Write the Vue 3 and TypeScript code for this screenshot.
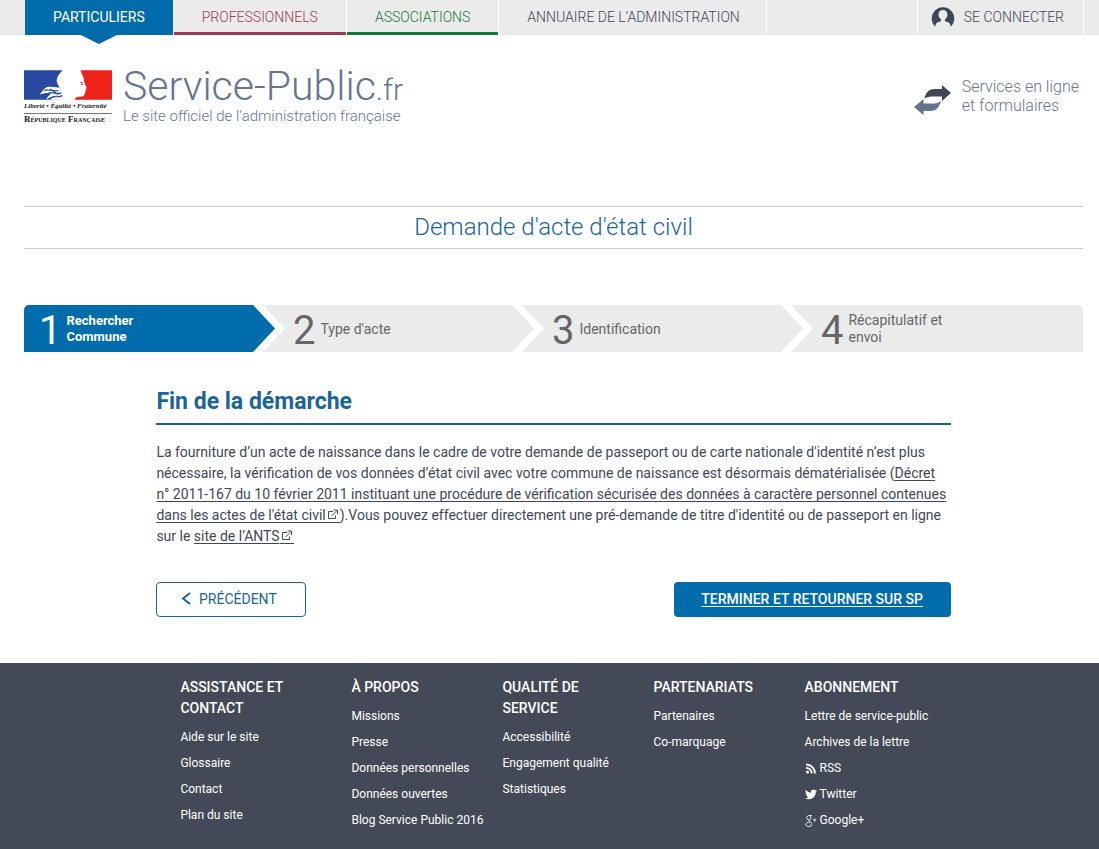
<script setup lang="ts">
interface NavTab { label: string; kind: string }
interface Step { label: string; wide: number }
interface FooterLink { label: string; icon?: 'rss' | 'twitter' | 'google' }
interface FooterColumn { title: string; links: FooterLink[] }

const tabs: NavTab[] = [
  { label: 'PARTICULIERS', kind: 'active' },
  { label: 'PROFESSIONNELS', kind: 'pro' },
  { label: 'ASSOCIATIONS', kind: 'asso' },
  { label: 'ANNUAIRE DE L’ADMINISTRATION', kind: 'directory' },
]

const steps: Step[] = [
  { label: 'Rechercher Commune', wide: 251 },
  { label: "Type d'acte", wide: 271 },
  { label: 'Identification', wide: 281 },
  { label: 'Récapitulatif et envoi', wide: 292 },
]

const columns: FooterColumn[] = [
  {
    title: 'Assistance et contact',
    links: [{ label: 'Aide sur le site' }, { label: 'Glossaire' }, { label: 'Contact' }, { label: 'Plan du site' }],
  },
  {
    title: 'À propos',
    links: [
      { label: 'Missions' },
      { label: 'Presse' },
      { label: 'Données personnelles' },
      { label: 'Données ouvertes' },
      { label: 'Blog Service Public 2016' },
    ],
  },
  {
    title: 'Qualité de service',
    links: [{ label: 'Accessibilité' }, { label: 'Engagement qualité' }, { label: 'Statistiques' }],
  },
  { title: 'Partenariats', links: [{ label: 'Partenaires' }, { label: 'Co-marquage' }] },
  {
    title: 'Abonnement',
    links: [
      { label: 'Lettre de service-public' },
      { label: 'Archives de la lettre' },
      { label: 'RSS', icon: 'rss' },
      { label: 'Twitter', icon: 'twitter' },
      { label: 'Google+', icon: 'google' },
    ],
  },
]
</script>

<template>
  <div class="page">
    <nav class="topbar">
      <a v-for="tab in tabs" :key="tab.kind" href="#" class="tab" :class="tab.kind">{{ tab.label }}</a>
      <span class="filler"></span>
      <a href="#" class="tab login">
        <svg width="24" height="21" viewBox="0 0 24 21" aria-hidden="true">
          <path fill="#3f4756" d="M4.3 19.8A11.3 11.3 0 1 1 19.7 19.8C19.5 16.3 18.2 15.2 14.2 14.2C13.6 13.7 13.8 12.8 14.4 12.1C15.6 11 16.6 9.4 16.4 7.2C16.2 4.6 14.6 3.1 12 3.1S7.8 4.6 7.6 7.2C7.4 9.4 8.4 11 9.6 12.1C10.2 12.8 10.4 13.7 9.8 14.2C5.8 15.2 4.5 16.3 4.3 19.8Z" />
        </svg>
        SE CONNECTER
      </a>
      <span class="edge"></span>
    </nav>

    <header class="header">
      <a href="#" class="brand">
        <span class="republic">
          <svg class="flag" viewBox="0 0 87 29" aria-hidden="true">
            <path fill="#2749a0" d="M0 0H38C37 2 35 3 34 5C32 8 32 11 33 13C34 16 36 18 37 20L38 26C36 28 34 28 32 29H0Z" />
            <path fill="#fff" d="M15 24C18 22 19 18 23 16.500C26 16 30 16.500 34 17L40 20V29H26C28 27 30 26 34 25C30 25 26 26 22 29C23 26 25 25 27 23C23 22 21 22 15 24Z" />
            <path fill="none" stroke="#2749a0" stroke-width="1.200" d="M20 20C24 18 27 21 34 20M24 22.500C29 21 31 24 37 22.500M28 26.500C32 25.500 34 27 38 25M26 18.500L34 24" />
            <path fill="#ee2218" d="M56 0H87V29H50C50.500 26.500 53 26 57 26C60 25.500 60 23.500 60.500 21.500C61.500 20.500 61 19.500 61 18.500C62.500 17.500 62 16 60 13.500C59 10 59.500 7 57.500 4C56.500 2.500 56 1 56 0Z" />
            <path fill="none" stroke="#555" stroke-width="1" d="M55.500 12L58.500 12.500M56.500 14H58" />
          </svg>
          <span class="motto">Liberté • Égalité • Fraternité</span>
          <span class="state">République Française</span>
        </span>
        <span class="wordmark">
          <span class="name">Service-Public<span class="tld">.fr</span></span>
          <span class="tagline">Le site officiel de l’administration française</span>
        </span>
      </a>
      <a href="#" class="services">
        <svg width="38" height="32" viewBox="0 0 38 32" aria-hidden="true">
          <path fill="#3f4756" d="M10.500 14.500C12 8 15 5 21 5H28V1L37 9L28 17V12.500H20C16 12.500 13 13 10.500 14.500Z" />
          <path fill="#66758f" d="M27 17C25 24 22 27 16 27H9.500V31L0 23L9.500 15V19.500H18C22 19.500 24.500 19 27 17Z" />
        </svg>
        <span>Services en ligne<br />et formulaires</span>
      </a>
    </header>

    <main class="main">
      <h1 class="title">Demande d'acte d'état civil</h1>

      <ol class="steps">
        <li
          v-for="(step, i) in steps"
          :key="step.label"
          class="step"
          :class="{ current: i === 0, last: i === steps.length - 1 }"
          :style="{ flexGrow: step.wide }"
        >
          <span class="number">{{ i + 1 }}</span>
          <span class="step-label">{{ step.label }}</span>
        </li>
      </ol>

      <section class="content">
        <h2>Fin de la démarche</h2>
        <p>
          La fourniture d’un acte de naissance dans le cadre de votre demande de passeport ou de carte nationale
          d'identité n’est plus nécessaire, la vérification de vos données d’état civil avec votre commune de naissance
          est désormais dématérialisée (<a href="#">Décret n° 2011-167 du 10 février 2011 instituant une procédure de
          vérification sécurisée des données à caractère personnel contenues dans les actes de l'état civil<svg class="ext" viewBox="0 0 14 11" aria-hidden="true"><path d="M7 2.500H2.500V9.500H9.500V6.500M5.500 7L11 1.500M7.500 1H11.500V5" /></svg></a>).Vous
          pouvez effectuer directement une pré-demande de titre d'identité ou de passeport en ligne sur le
          <a href="#">site de l’ANTS<svg class="ext" viewBox="0 0 14 11" aria-hidden="true"><path d="M7 2.500H2.500V9.500H9.500V6.500M5.500 7L11 1.500M7.500 1H11.500V5" /></svg></a>
        </p>
        <div class="actions">
          <button type="button" class="btn back">
            <svg width="10" height="14" viewBox="0 0 10 14" aria-hidden="true">
              <path d="M9 1L2 6.500L9 12" fill="none" stroke="currentColor" stroke-width="2" />
            </svg>
            PRÉCÉDENT
          </button>
          <a href="#" class="btn finish">TERMINER ET RETOURNER SUR SP</a>
        </div>
      </section>
    </main>

    <footer class="footer">
      <div class="footer-grid">
        <section v-for="column in columns" :key="column.title">
          <h3>{{ column.title }}</h3>
          <ul>
            <li v-for="link in column.links" :key="link.label">
              <a href="#">
                <svg v-if="link.icon === 'rss'" viewBox="0 0 12 12" aria-hidden="true">
                  <circle cx="2.500" cy="9" r="1.500" fill="#fff" />
                  <path d="M1 4.800A5.700 5.700 0 0 1 6.700 10.500M1 1.500A9 9 0 0 1 10 10.500" fill="none" stroke="#fff" stroke-width="1.800" />
                </svg>
                <svg v-else-if="link.icon === 'twitter'" viewBox="0 0 24 24" aria-hidden="true">
                  <path fill="#fff" d="M24 3.600a10 10 0 0 1-2.800.8 5 5 0 0 0 2.200-2.700 10 10 0 0 1-3.100 1.200 4.900 4.900 0 0 0-8.400 4.500A14 14 0 0 1 1.700 2.100a4.900 4.900 0 0 0 1.500 6.600 5 5 0 0 1-2.200-.6v.1a4.900 4.900 0 0 0 3.900 4.800 5 5 0 0 1-2.200.1 4.900 4.900 0 0 0 4.600 3.400A10 10 0 0 1 0 18.500 14 14 0 0 0 7.500 20.700c9.100 0 14-7.500 14-14v-.6A10 10 0 0 0 24 3.600z" />
                </svg>
                <svg v-else-if="link.icon === 'google'" viewBox="0 0 12 12" aria-hidden="true">
                  <path d="M7 .5H4.300C2.500.5 1.800 1.600 1.800 2.800S2.700 5 4 5 6 4 6 2.900 5.200.7 4.500.6M4 5C3.800 6 4.300 6.200 5.300 6.900 6.400 7.600 6.800 8.200 6.800 9.200 6.800 10.600 5.500 11.500 3.800 11.500 2 11.500.9 10.700.9 9.500S2.100 7.200 4.900 7.100M9.700 3.500V6.500M8.200 5H11.200" fill="none" stroke="#fff" stroke-width="0.900" />
                </svg>
                {{ link.label }}
              </a>
            </li>
          </ul>
        </section>
      </div>
    </footer>
  </div>
</template>

<style>
body {
  margin: 0;
  background: #fff;
}
</style>

<style scoped>
.page {
  display: flex;
  flex-direction: column;
  min-height: 100vh;
  font-family: Roboto, "Liberation Sans", sans-serif;
  font-size: 14px;
  line-height: 21px;
  color: #3f4756;
}
a {
  color: inherit;
}
.topbar {
  display: flex;
  height: 35px;
  padding-left: 25px;
  gap: 1px;
  background: linear-gradient(#ebebeb, #ebebeb) left / 25px 100% no-repeat #fff;
}
.tab {
  display: flex;
  align-items: center;
  box-sizing: border-box;
  height: 35px;
  padding: 0 28px;
  background: #ebebeb;
  font-weight: 300;
  text-decoration: none;
  white-space: nowrap;
}
.tab.active {
  position: relative;
  background: #006cac;
  color: #fff;
  font-weight: 400;
}
.tab.active::after {
  content: "";
  position: absolute;
  top: 100%;
  left: 50%;
  width: 36px;
  height: 9px;
  transform: translateX(-50%);
  background: #006cac;
  clip-path: polygon(0 0, 100% 0, 50% 100%);
}
.tab.pro {
  padding-top: 3px;
  border-bottom: 3px solid #9b3a50;
  color: #9b3a50;
}
.tab.asso {
  padding-top: 3px;
  border-bottom: 3px solid #15783c;
  color: #15783c;
}
.tab.directory {
  padding-right: 26px;
}
.filler {
  flex: 1;
  background: #ebebeb;
}
.tab.login {
  gap: 9px;
  padding: 0 19px 0 13px;
}
.edge {
  width: 15px;
  background: #ebebeb;
}
.header {
  display: flex;
  justify-content: space-between;
  align-items: flex-start;
  height: 136px;
  padding: 35px 20px 0 24px;
  color: #66758f;
}
.brand {
  display: flex;
  gap: 11px;
  text-decoration: none;
}
.republic {
  display: flex;
  flex-direction: column;
  width: 88px;
  font-family: "Liberation Serif", serif;
  color: #222;
  white-space: nowrap;
}
.flag {
  width: 88px;
  height: 30px;
}
.motto {
  padding: 2px 0;
  border-bottom: 1px solid #777;
  font-size: 7px;
  font-style: italic;
  font-weight: 700;
  line-height: 9px;
}
.state {
  font-size: 9px;
  font-weight: 700;
  font-variant: small-caps;
  line-height: 10px;
}
.wordmark {
  display: flex;
  flex-direction: column;
  font-weight: 300;
}
.name {
  font-size: 41px;
  line-height: 33px;
}
.tld {
  font-size: 30px;
}
.tagline {
  font-size: 15px;
  line-height: 20px;
}
.services {
  display: flex;
  gap: 10px;
  margin-top: 7px;
  text-decoration: none;
  font-size: 16px;
  font-weight: 300;
  line-height: 19px;
}
.services svg {
  margin-top: 7px;
}
.main {
  padding: 0 16px 46px 24px;
}
.title {
  margin: 0;
  border: solid #ccc;
  border-width: 1px 0;
  font-size: 24px;
  font-weight: 300;
  line-height: 41px;
  text-align: center;
  color: #19659b;
}
.steps {
  display: flex;
  margin: 56px 0 0;
  padding: 0;
  list-style: none;
  border-radius: 5px 5px 0 0;
  overflow: hidden;
}
.step {
  display: flex;
  align-items: center;
  flex: 1 1 0;
  min-width: 0;
  height: 47px;
  gap: 5px;
  background: #ebebeb;
  color: #666;
  line-height: 17px;
  clip-path: polygon(0 0, calc(100% - 22px) 0, 100% 50%, calc(100% - 22px) 100%, 0 100%, 22px 50%);
}
.step + .step {
  margin-left: -12px;
}
.step.current {
  background: #006cac;
  color: #fff;
  clip-path: polygon(0 0, calc(100% - 22px) 0, 100% 50%, calc(100% - 22px) 100%, 0 100%);
}
.step.last {
  clip-path: polygon(0 0, 100% 0, 100% 100%, 0 100%, 22px 50%);
}
.number {
  margin-left: 30px;
  padding-top: 3px;
  font-size: 40px;
  font-weight: 400;
  line-height: 47px;
}
.current .number {
  margin-left: 15px;
}
.step-label {
  max-width: 100px;
  padding-top: 1px;
}
.current .step-label {
  font-size: 13px;
  font-weight: 700;
  line-height: 16px;
}
.content {
  width: 75%;
  margin: 0 auto;
}
h2 {
  margin: 32px 0 0;
  padding-bottom: 4px;
  border-bottom: 2px solid #19677f;
  font-size: 23px;
  font-weight: 700;
  line-height: 35px;
  color: #19659b;
}
p {
  margin: 17px 0 0;
}
p a,
.finish {
  text-underline-offset: 2px;
  text-decoration-skip-ink: none;
}
.ext {
  width: 14px;
  height: 11px;
  padding-bottom: 2px;
  border-bottom: 1px solid #3f4756;
  vertical-align: -3px;
}
.ext path {
  fill: none;
  stroke: #3f4756;
  stroke-width: 1;
}
.actions {
  display: flex;
  justify-content: space-between;
  margin-top: 35px;
}
.btn {
  display: flex;
  align-items: center;
  justify-content: center;
  box-sizing: border-box;
  height: 35px;
  border-radius: 4px;
  font-family: inherit;
  font-size: 14px;
}
.back {
  gap: 8px;
  width: 150px;
  padding: 0 5px 2px 0;
  border: 1px solid #19659b;
  background: #fff;
  color: #19659b;
}
.finish {
  width: 277px;
  background: #006cac;
  color: #fff;
  font-weight: 500;
}
.footer {
  flex: 1;
  padding: 0 16px 8px 24px;
  background: #434956;
  color: #fff;
}
.footer-grid {
  display: grid;
  grid-template-columns: 171fr repeat(3, 151fr) 146fr;
  box-sizing: border-box;
  width: 75%;
  margin: 0 auto;
  padding: 14px 0 0 24px;
}
h3 {
  max-width: 120px;
  margin: 0 0 8px;
  font-size: 14px;
  font-weight: 500;
  line-height: 21px;
  text-transform: uppercase;
}
ul {
  display: flex;
  flex-direction: column;
  gap: 5px;
  margin: 0;
  padding: 0;
  list-style: none;
  font-size: 12px;
  white-space: nowrap;
}
li a {
  display: flex;
  align-items: center;
  gap: 3px;
  text-decoration: none;
}
li svg {
  width: 12px;
  height: 12px;
}
</style>
